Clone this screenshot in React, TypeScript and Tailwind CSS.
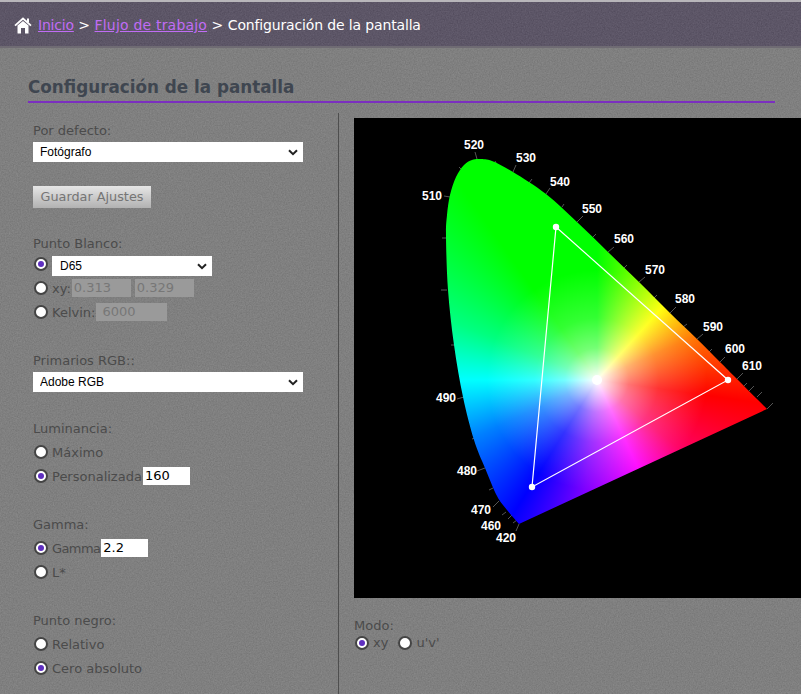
import React from "react";

const sans = "font-['DejaVu_Sans',Verdana,sans-serif]";
const arial = "font-['Liberation_Sans',Arial,sans-serif]";

function Noise({ id }: { id: string }) {
  return (
    <svg className="pointer-events-none absolute inset-0 h-full w-full opacity-[0.14]" aria-hidden="true">
      <filter id={id} colorInterpolationFilters="sRGB">
        <feTurbulence type="fractalNoise" baseFrequency="0.75" numOctaves={2} seed={4} />
        <feColorMatrix values="0.5 0.5 0 0 0  0.5 0.5 0 0 0  0.5 0.5 0 0 0  0 0 0 0 1" />
      </filter>
      <rect width="100%" height="100%" filter={`url(#${id})`} />
    </svg>
  );
}

function Radio({ on }: { on?: boolean }) {
  return (
    <span className="flex h-[14px] w-[14px] shrink-0 items-center justify-center rounded-full border-2 border-[#444444] bg-white">
      {on && <span className="h-[6px] w-[6px] rounded-full bg-[#5f2fc0]" />}
    </span>
  );
}

function Chevron() {
  return (
    <svg viewBox="0 0 10 7" className="pointer-events-none absolute right-[5px] top-[7px] h-[7px] w-[10px]" aria-hidden="true">
      <path d="M1 1.2 L5 5.2 L9 1.2" fill="none" stroke="#222222" strokeWidth="2" />
    </svg>
  );
}

function Select({ value, width, pad }: { value: string; width: string; pad: string }) {
  return (
    <div className={`relative h-5 ${width}`}>
      <select
        defaultValue={value}
        className={`block h-5 w-full appearance-none bg-white text-[12px] leading-5 text-black outline-none ${pad} ${arial}`}
      >
        <option>{value}</option>
      </select>
      <Chevron />
    </div>
  );
}

function Field({ value, width, disabled }: { value: string; width: string; disabled?: boolean }) {
  return (
    <input
      readOnly
      value={value}
      className={`h-[18px] text-[13px] outline-none ${width} ${sans} ${
        disabled ? "bg-[#9a9a9a] pl-[2px] text-[#777777]" : "bg-white pl-[2px] text-black"
      }`}
    />
  );
}

function Row({
  on,
  label,
  labelClass = "",
  children,
}: {
  on?: boolean;
  label?: string;
  labelClass?: string;
  children?: React.ReactNode;
}) {
  return (
    <div className="flex h-6 items-center">
      <div className="ml-px">
        <Radio on={on} />
      </div>
      {label && <span className={`ml-[4px] mr-[1px] pt-[2px] text-[13px] text-[#4b4b4b] ${labelClass}`}>{label}</span>}
      {children}
    </div>
  );
}

function Label({ children, className = "" }: { children: React.ReactNode; className?: string }) {
  return <div className={`h-[18px] text-[13px] leading-[20px] text-[#4b4b4b] ${className}`}>{children}</div>;
}

const outline: [number, number][] = [
  [519, 524], [507, 510], [497, 496], [485, 468], [474, 440], [463, 397], [454, 345], [448, 290], [446, 237],
  [447, 215], [450, 195], [456, 177], [464, 165], [472, 160], [480, 159], [492, 161], [513, 172], [546, 194],
  [577, 222], [608, 252], [639, 282], [670, 313], [697, 339], [720, 362], [737, 379], [767, 409],
];

function smooth(points: [number, number][]) {
  let d = `M${points[0][0]} ${points[0][1]}`;
  for (let i = 0; i < points.length - 1; i++) {
    const p0 = points[Math.max(i - 1, 0)];
    const p1 = points[i];
    const p2 = points[i + 1];
    const p3 = points[Math.min(i + 2, points.length - 1)];
    d += ` C${p1[0] + (p2[0] - p0[0]) / 6} ${p1[1] + (p2[1] - p0[1]) / 6} ${p2[0] - (p3[0] - p1[0]) / 6} ${p2[1] - (p3[1] - p1[1]) / 6} ${p2[0]} ${p2[1]}`;
  }
  return d + " Z";
}

const ticks = [
  [459, 167, 462, 170], [475, 152, 477, 159], [495, 161, 496, 163], [516, 165, 513, 172], [532, 179, 529, 183],
  [550, 188, 546, 194], [564, 204, 562, 207], [583, 216, 577, 222], [596, 234, 593, 237], [614, 247, 608, 252],
  [627, 265, 624, 268], [645, 277, 639, 282], [657, 295, 654, 298], [676, 307, 670, 313], [687, 324, 683, 327],
  [703, 334, 697, 339], [712, 349, 708, 353], [725, 357, 720, 362], [743, 373, 737, 379], [747, 383, 743, 387],
  [754, 386, 748, 392], [762, 392, 757, 397], [773, 403, 767, 409], [444, 196, 450, 197], [442, 238, 446, 238],
  [441, 290, 447, 290], [451, 345, 454, 345], [457, 399, 464, 397], [472, 439, 475, 438], [477, 471, 485, 468],
  [489, 490, 493, 488], [493, 507, 499, 501], [502, 515, 506, 512], [508, 519, 513, 514], [513, 523, 517, 520],
  [516, 531, 519, 524],
];

const labels: [string, number, number][] = [
  ["520", 474, 145], ["530", 526, 158], ["540", 560, 182], ["550", 592, 209], ["560", 624, 239], ["570", 655, 270],
  ["580", 685, 299], ["590", 713, 327], ["600", 735, 349], ["610", 752, 366], ["510", 432, 196], ["490", 446, 398],
  ["480", 467, 471], ["470", 481, 510], ["460", 491, 526], ["420", 506, 538],
];

function Chromaticity() {
  return (
    <svg viewBox="354 118 480 480" className="block h-[480px] w-[480px] shrink-0 bg-black">
      <defs>
        <clipPath id="gamut">
          <path d={smooth(outline)} />
        </clipPath>
      </defs>
      {ticks.map((t, i) => (
        <line key={i} x1={t[0]} y1={t[1]} x2={t[2]} y2={t[3]} stroke="#555555" strokeWidth="1" />
      ))}
      <g clipPath="url(#gamut)">
        <foreignObject x="354" y="118" width="480" height="480">
          <div className="relative h-[480px] w-[480px] bg-[conic-gradient(at_243px_262px,#00ff00_0deg,#55ff00_14deg,#ffff00_42deg,#ff7700_66deg,#ff0000_98deg,#ff0066_130deg,#ff00ff_155deg,#8000ff_186deg,#0000ff_212deg,#0080ff_245deg,#00ffff_270deg,#00ff80_292deg,#00ff00_325deg,#00ff00_360deg)]">
            <div className="absolute inset-0 bg-[radial-gradient(circle_at_243px_262px,#ffffff_0px,rgba(255,255,255,0.8)_12px,rgba(255,255,255,0.46)_32px,rgba(255,255,255,0.2)_62px,rgba(255,255,255,0)_110px)]" />
          </div>
        </foreignObject>
      </g>
      <polygon points="556,227 728,380 532,487" fill="none" stroke="#ffffff" strokeWidth="1.2" />
      <circle cx="597" cy="380" r="5" fill="#ffffff" />
      <circle cx="556" cy="227" r="3.2" fill="#ffffff" />
      <circle cx="728" cy="380" r="3.2" fill="#ffffff" />
      <circle cx="532" cy="487" r="3.2" fill="#ffffff" />
      {labels.map(([t, x, y]) => (
        <text
          key={t}
          x={x}
          y={y + 4}
          textAnchor="middle"
          fill="#ffffff"
          fontSize="12"
          fontWeight="700"
          fontFamily="'Liberation Sans', Arial, sans-serif"
        >
          {t}
        </text>
      ))}
    </svg>
  );
}

export default function App() {
  return (
    <div className={`relative flex h-[694px] w-[801px] flex-col overflow-hidden bg-[#808080] ${sans}`}>
      <Noise id="n1" />
      <header className="relative flex h-[48px] shrink-0 items-center border-t-2 border-b-2 border-t-[#b8b6ba] border-b-[#6f6b73] bg-[#574f63] pl-[14px] pt-[3px]">
        <Noise id="n2" />
        <svg viewBox="0 0 18 17" className="relative h-[17px] w-[18px]" aria-hidden="true">
          <path d="M1 8.6 L9 1.5 L17 8.6" fill="none" stroke="#ffffff" strokeWidth="1.8" />
          <rect x="13" y="1.5" width="2" height="4" fill="#ffffff" />
          <path d="M3.5 8.5 L9 4 L14.5 8.5 V16.5 H11 V11 H7 V16.5 H3.5 Z" fill="#ffffff" />
        </svg>
        <nav className="relative ml-[6px] whitespace-nowrap text-[14px] text-white">
          <a className="tracking-[-0.2px] text-[#c06cf5] underline">Inicio</a>
          <span> &gt; </span>
          <a className="tracking-[0.2px] text-[#c06cf5] underline">Flujo de trabajo</a>
          <span> &gt; </span>
          <span className="tracking-[-0.15px]">Configuración de la pantalla</span>
        </nav>
      </header>

      <div className="relative flex min-h-0 flex-1 flex-col">
        <h1 className="ml-[28px] mt-[27px] h-[28px] w-[747px] border-b-2 border-[#7b2fc0] text-[16.8px] font-bold leading-[24px] text-[#3f4650]">
          Configuración de la pantalla
        </h1>
        <div className="mt-[10px] flex min-h-0 flex-1">
          <div className="w-[339px] shrink-0 border-r border-[#4e4e4e] pl-[33px] pt-[8px]">
            <Label>Por defecto:</Label>
            <div className="mt-[3px]">
              <Select value="Fotógrafo" width="w-[270px]" pad="pl-[7px]" />
            </div>
            <button className="mt-[24px] block h-[22px] w-[118px] bg-gradient-to-b from-[#e6e6e6] to-[#b2b2b2] text-[12.8px] text-[#757575]">
              Guardar Ajustes
            </button>

            <Label className="mt-[26px]">Punto Blanco:</Label>
            <Row on>
              <div className="ml-[4px] mt-[4px] self-start">
                <Select value="D65" width="w-[160px]" pad="pl-[8px]" />
              </div>
            </Row>
            <Row label="xy:">
              <Field value="0.313" width="w-[59px]" disabled />
              <div className="w-1" />
              <Field value="0.329" width="w-[59px]" disabled />
            </Row>
            <Row label="Kelvin:">
              <Field value="6000" width="w-[71px] indent-[4px]" disabled />
            </Row>

            <Label className="mt-[27px]">Primarios RGB::</Label>
            <div className="mt-[3px]">
              <Select value="Adobe RGB" width="w-[270px]" pad="pl-[7px]" />
            </div>

            <Label className="mt-[27px]">Luminancia:</Label>
            <div className="mt-[3px]">
              <Row label="Máximo" />
              <Row on label="Personalizada">
                <Field value="160" width="w-[47px]" />
              </Row>
            </div>

            <Label className="mt-[27px]">Gamma:</Label>
            <div className="mt-[3px]">
              <Row on label="Gamma" labelClass="tracking-[-0.6px]">
                <Field value="2.2" width="w-[47px]" />
              </Row>
              <Row label="L*" />
            </div>

            <Label className="mt-[27px]">Punto negro:</Label>
            <div className="mt-[3px]">
              <Row label="Relativo" />
              <Row on label="Cero absoluto" />
            </div>
          </div>

          <div className="pl-[15px] pt-[5px]">
            <Chromaticity />
            <Label className="mt-[18px]">Modo:</Label>
            <div className="flex h-[18px] items-center">
              <div className="ml-px">
                <Radio on />
              </div>
              <span className="ml-[4px] text-[13px] text-[#4b4b4b]">xy</span>
              <div className="ml-[10px]">
                <Radio />
              </div>
              <span className="ml-[4px] text-[13px] text-[#4b4b4b]">u'v'</span>
            </div>
          </div>
        </div>
      </div>
    </div>
  );
}
